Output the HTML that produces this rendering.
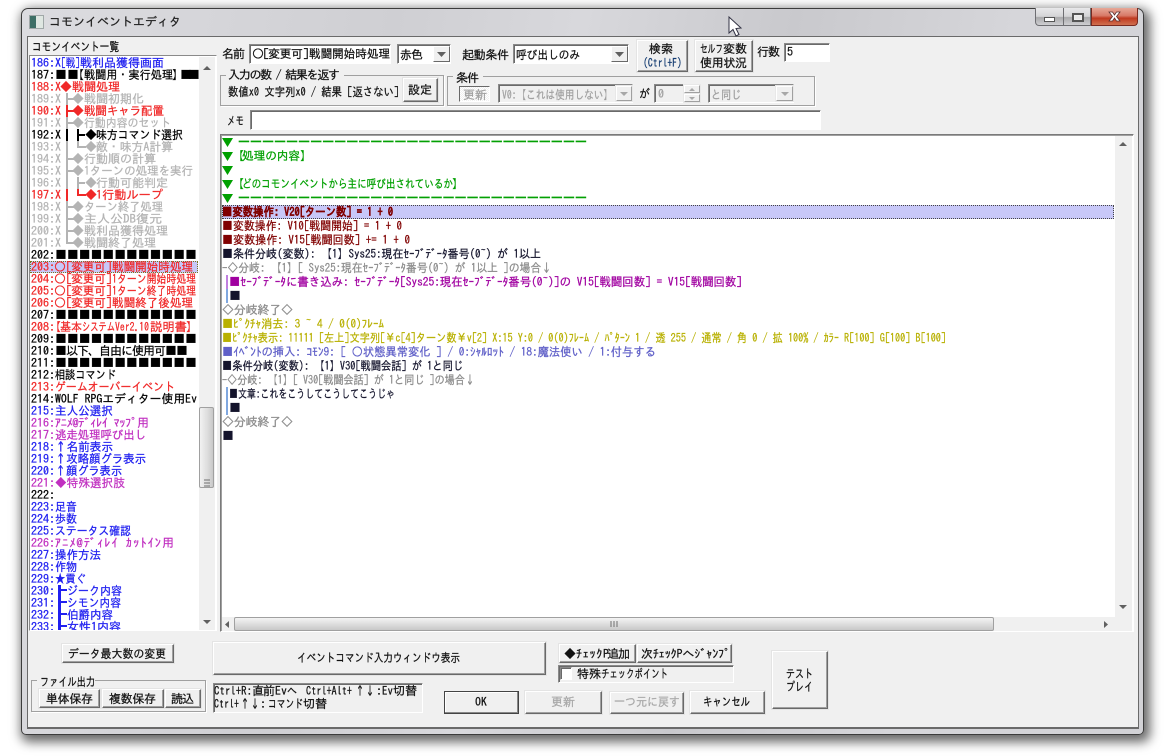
<!DOCTYPE html>
<html><head><meta charset="utf-8">
<style>
html,body{margin:0;padding:0;background:#fff;width:1165px;height:756px;overflow:hidden}
div{position:absolute;box-sizing:border-box}
#win{left:21px;top:8px;width:1123px;height:727px;border:1px solid #3c3c3c;border-radius:7px 7px 5px 5px;background:linear-gradient(100deg,#dcdce0 0%,#cfcfd3 30%,#d8d8dc 45%,#c9c9cd 62%,#d6d6da 80%,#d2d2d6 100%);box-shadow:3px 4px 11px 3px rgba(0,0,0,.6)}
#client{left:27px;top:36px;width:1112px;height:693px;background:#f0f0f0;border:1px solid #6a6a6a;border-bottom-width:2px}
.in{background:#f0f0f0;border:1px solid;border-color:#8a8a8a #fff #fff #8a8a8a;box-shadow:inset 1px 1px #6a6a6a}
.w{background:#fff}
.btn{background:#f0f0f0;border:1px solid;border-color:#fff #696969 #696969 #fff;box-shadow:inset -1px -1px #a0a0a0,0 0 0 1px #e4e4e4}
.dbtn{background:#f0f0f0;border:1px solid;border-color:#fff #a0a0a0 #a0a0a0 #fff;box-shadow:0 0 0 1px #e8e8e8}
.grp{border:1px solid #a0a0a0;box-shadow:1px 1px #fff}
.lab{background:#f0f0f0;height:6px}
.arr{background:#f0f0f0;border:1px solid;border-color:#fff #696969 #696969 #fff}
.track{background:#f0f0f0}
.thv{background:linear-gradient(90deg,#f2f2f2,#dcdcdc 60%,#c8c8c8);border:1px solid #a0a0a0;border-radius:2px}
.thh{background:linear-gradient(180deg,#f4f4f4,#dcdcdc 55%,#c8c8c8);border:1px solid #a0a0a0;border-radius:2px}
svg{position:absolute;left:0;top:0}
text{font-family:"IPAGothic","Noto Sans CJK JP",monospace;font-size:12px;white-space:pre;stroke-width:.25px}
</style></head><body>
<div id="win"></div>
<div style="left:29px;top:15px;width:15px;height:14px;background:linear-gradient(90deg,#3d6f66 0 45%,#dfe7e2 45% 100%);border:1px solid #a0a8a8"></div>
<div style="left:1035px;top:8px;width:56px;height:18px;border:1px solid #6e6e72;border-top:0;border-radius:0 0 0 4px;background:linear-gradient(180deg,#e8e8ea,#d4d4d6 50%,#a8a8aa 55%,#cfcfd2)"></div>
<div style="left:1063px;top:8px;width:1px;height:18px;background:#6e6e72"></div>
<div style="left:1091px;top:8px;width:47px;height:18px;border:1px solid #7a2a20;border-top:0;border-radius:0 0 4px 0;background:linear-gradient(180deg,#e6a898,#d87a68 45%,#c03a20 60%,#d07050)"></div>
<div style="left:1044px;top:17px;width:11px;height:5px;background:#fff;border:1px solid #555"></div>
<div style="left:1072px;top:13px;width:12px;height:9px;border:2px solid #555;box-shadow:inset 0 0 0 1px #eee;background:#e8e8e8"></div>

<div id="client"></div>

<!-- event list -->
<div style="left:29px;top:55px;width:188px;height:576px;background:#fff;border:1px solid;border-color:#8a8a8a #fff #fff #8a8a8a"></div>
<div class="track" style="left:199px;top:57px;width:16px;height:573px"></div>
<div class="thv" style="left:199px;top:407px;width:15px;height:81px"></div>
<div style="left:30px;top:261px;width:168px;height:12px;background:#c8c8f8;outline:1px dotted #7a7a20;outline-offset:-1px"></div>

<!-- name row -->
<div class="in w" style="left:249px;top:44px;width:142px;height:20px"></div>
<div class="in w" style="left:397px;top:44px;width:54px;height:20px"></div>
<div class="arr" style="left:433px;top:46px;width:17px;height:16px"></div>
<div class="in w" style="left:513px;top:44px;width:116px;height:20px"></div>
<div class="arr" style="left:611px;top:46px;width:17px;height:16px"></div>
<div class="btn" style="left:637px;top:40px;width:51px;height:32px"></div>
<div class="btn" style="left:695px;top:40px;width:58px;height:32px"></div>
<div class="in w" style="left:784px;top:43px;width:46px;height:19px"></div>

<!-- groups -->
<div class="grp" style="left:220px;top:75px;width:224px;height:31px"></div>
<div class="lab" style="left:226px;top:72px;width:118px"></div>
<div class="btn" style="left:403px;top:78px;width:35px;height:24px"></div>
<div class="grp" style="left:447px;top:76px;width:368px;height:30px"></div>
<div class="lab" style="left:453px;top:73px;width:30px"></div>
<div style="left:459px;top:86px;width:31px;height:16px;border:1px solid;border-color:#696969 #fff #fff #696969;background:repeating-conic-gradient(#f0f0f0 0 25%,#fff 0 50%) 0 0/2px 2px"></div>
<div class="in" style="left:498px;top:84px;width:135px;height:19px"></div>
<div class="dbtn" style="left:616px;top:86px;width:16px;height:15px"></div>
<div class="in" style="left:654px;top:84px;width:47px;height:19px"></div>
<div class="dbtn" style="left:684px;top:85px;width:16px;height:8px"></div>
<div class="dbtn" style="left:684px;top:94px;width:16px;height:8px"></div>
<div class="in" style="left:708px;top:84px;width:86px;height:19px"></div>
<div class="dbtn" style="left:776px;top:86px;width:17px;height:15px"></div>
<div class="in w" style="left:250px;top:110px;width:571px;height:20px"></div>

<!-- command list -->
<div style="left:220px;top:134px;width:914px;height:498px;background:#fff;border:1px solid;border-color:#7a7a7a #fff #fff #7a7a7a;box-shadow:inset 1px 1px #a0a0a0"></div>
<div style="left:222px;top:205px;width:892px;height:14px;background:#c8c8f8;outline:1px dotted #444;outline-offset:-1px"></div>
<div class="track" style="left:1115px;top:136px;width:17px;height:495px"></div>
<div class="track" style="left:222px;top:617px;width:910px;height:14px"></div>
<div class="thh" style="left:234px;top:617px;width:760px;height:14px"></div>

<!-- bottom -->
<div class="btn" style="left:62px;top:644px;width:112px;height:19px"></div>
<div class="grp" style="left:31px;top:680px;width:175px;height:32px"></div>
<div class="lab" style="left:37px;top:677px;width:58px"></div>
<div class="btn" style="left:39px;top:689px;width:61px;height:19px"></div>
<div class="btn" style="left:102px;top:689px;width:62px;height:19px"></div>
<div class="btn" style="left:165px;top:689px;width:36px;height:19px"></div>
<div class="btn" style="left:213px;top:642px;width:333px;height:33px"></div>
<div class="in" style="left:213px;top:683px;width:210px;height:30px"></div>
<div class="btn" style="left:559px;top:644px;width:77px;height:19px"></div>
<div class="btn" style="left:637px;top:644px;width:95px;height:19px"></div>
<div class="in" style="left:558px;top:665px;width:176px;height:18px"></div>
<div class="in w" style="left:560px;top:667px;width:12px;height:13px"></div>
<div class="btn" style="left:444px;top:691px;width:75px;height:23px;border-color:#444;box-shadow:inset -1px -1px #888,inset 1px 1px #fff"></div>
<div class="btn" style="left:525px;top:691px;width:77px;height:23px"></div>
<div class="btn" style="left:610px;top:692px;width:74px;height:22px"></div>
<div class="btn" style="left:690px;top:691px;width:75px;height:23px"></div>
<div class="btn" style="left:772px;top:651px;width:56px;height:58px"></div>

<svg width="1165" height="756" xmlns="http://www.w3.org/2000/svg">
<defs><clipPath id="lc"><rect x="30" y="56" width="169" height="574"/></clipPath></defs>
<!-- scrollbar arrows -->
<g fill="#606060">
<path d="M203 70l4-4 4 4z"/><path d="M203 620h8l-4 4z"/>
<path d="M1119 146l4-4 4 4z"/><path d="M1119 605h8l-4 4z"/>
<path d="M229 621v7l-4-3.500z"/><path d="M1104 621v7l4-3.500z"/>
<path d="M437 52h9l-4.500 5z"/><path d="M615 52h9l-4.500 5z"/>
</g>
<g fill="#a8a8a8">
<path d="M620 92h8l-4 4z"/><path d="M781 92h8l-4 4z"/><path d="M689 91l3-3 3 3z"/><path d="M689 97h6l-3 3z"/>
</g>
<path d="M204 480h6M204 483h6M204 486h6M611 621v6M614 621v6M617 621v6" stroke="#707070" fill="none"/>
<!-- cursor -->
<path d="M729 17v16l4-3.500 3 6.500 3-1.500-3-6 5-.5z" fill="#fff" stroke="#334" stroke-width="1"/>
<!-- close X -->
<path d="M1109 12l3.500 0 2 3 2-3 3.500 0-3.500 4.500 3.500 4.500-3.500 0-2-3-2 3-3.500 0 3.500-4.500z" fill="#fff" stroke="#5a3030" stroke-width=".8"/>

<text x="49" y="26" fill="#222" stroke="#222" textLength="132">コモンイベントエディタ</text>
<text x="32" y="51" fill="#111" stroke="#111" textLength="87" lengthAdjust="spacingAndGlyphs">コモンイベント一覧</text>

<g clip-path="url(#lc)">
<g fill="#2020f0" stroke="#2020f0">
<text x="31" y="67">186:X</text><text x="61" y="67" textLength="19" lengthAdjust="spacingAndGlyphs">[戦]</text><text x="80" y="67">戦利品獲得画面</text>
<text x="31" y="415">215:</text><text x="55" y="415" textLength="58" lengthAdjust="spacingAndGlyphs">主人公選択</text>
<text x="31" y="451">218:</text><text x="55" y="451" textLength="58" lengthAdjust="spacingAndGlyphs">↑名前表示</text>
<text x="31" y="463">219:</text><text x="55" y="463" textLength="91" lengthAdjust="spacingAndGlyphs">↑攻略顔グラ表示</text>
<text x="31" y="475">220:</text><text x="55" y="475" textLength="67" lengthAdjust="spacingAndGlyphs">↑顔グラ表示</text>
<text x="31" y="511">223:</text><text x="55" y="511" textLength="22" lengthAdjust="spacingAndGlyphs">足音</text>
<text x="31" y="523">224:</text><text x="55" y="523" textLength="22" lengthAdjust="spacingAndGlyphs">歩数</text>
<text x="31" y="535">225:</text><text x="55" y="535" textLength="76" lengthAdjust="spacingAndGlyphs">ステータス確認</text>
<text x="31" y="559">227:</text><text x="55" y="559" textLength="46" lengthAdjust="spacingAndGlyphs">操作方法</text>
<text x="31" y="571">228:</text><text x="55" y="571" textLength="22" lengthAdjust="spacingAndGlyphs">作物</text>
<text x="31" y="583">229:</text><text x="55" y="583" textLength="31" lengthAdjust="spacingAndGlyphs">★貢ぐ</text>
<text x="31" y="595">230:</text><text x="67" y="595" textLength="55" lengthAdjust="spacingAndGlyphs">ジーク内容</text>
<text x="31" y="607">231:</text><text x="67" y="607" textLength="54" lengthAdjust="spacingAndGlyphs">シモン内容</text>
<text x="31" y="619">232:</text><text x="67" y="619" textLength="46" lengthAdjust="spacingAndGlyphs">伯爵内容</text>
<text x="31" y="631">233:</text><text x="67" y="631" textLength="54" lengthAdjust="spacingAndGlyphs">女性1内容</text>
<path d="M58 585h3v47h-3zM61 589h6v2h-6zM61 601h6v2h-6zM61 613h6v2h-6zM61 625h6v2h-6z" stroke="none"/>
</g>
<g fill="#000" stroke="#000">
<text x="31" y="79">187:</text><text x="55" y="79">■■</text><text x="72" y="79">【</text><text x="84" y="79" textLength="89" lengthAdjust="spacingAndGlyphs">戦闘用・実行処理</text><text x="172" y="79">】</text><text x="180" y="79" textLength="20">■■</text>
<text x="31" y="139">192:X</text><text x="85" y="139">◆</text><text x="96" y="139" textLength="87" lengthAdjust="spacingAndGlyphs">味方コマンド選択</text>
<path d="M66 129h2v12h-2zM77 129h2v12h-2zM79 134h6v2h-6z" stroke="none"/>
<text x="31" y="259">202:</text><text x="55" y="259" textLength="142">■■■■■■■■■■■■</text>
<text x="31" y="319">207:</text><text x="55" y="319" textLength="142">■■■■■■■■■■■■</text>
<text x="31" y="343">209:</text><text x="55" y="343" textLength="142">■■■■■■■■■■■■</text>
<text x="31" y="355">210:</text><text x="55" y="355" textLength="133">■以下、自由に使用可■■</text>
<text x="31" y="367">211:</text><text x="55" y="367" textLength="142">■■■■■■■■■■■■</text>
<text x="31" y="379">212:</text><text x="55" y="379" textLength="61" lengthAdjust="spacingAndGlyphs">相談コマンド</text>
<text x="31" y="403">214:</text><text x="55" y="403" textLength="142" lengthAdjust="spacingAndGlyphs">WOLF RPGエディター使用Ev</text>
<text x="31" y="499">222:</text>
</g>
<g fill="#f02828" stroke="#f02828">
<text x="31" y="91">188:X</text><text x="60" y="91">◆</text><text x="72" y="91" textLength="48">戦闘処理</text>
<text x="31" y="115">190:X</text><text x="72" y="115">◆</text><text x="84" y="115" textLength="80" lengthAdjust="spacingAndGlyphs">戦闘キャラ配置</text>
<path d="M66 105h2v12h-2zM68 110h6v2h-6z" stroke="none"/>
<text x="31" y="199">197:X</text><text x="85" y="199">◆</text><text x="96" y="199" textLength="67" lengthAdjust="spacingAndGlyphs">1行動ループ</text>
<path d="M66 189h2v12h-2zM77 189h2v7h-2zM77 194h9v2h-9z" stroke="none"/>
<text x="31" y="271">203:</text><text x="54" y="271">○</text><text x="66" y="271">[</text><text x="71" y="271" textLength="35">変更可</text><text x="106" y="271">]</text><text x="112" y="271" textLength="81" lengthAdjust="spacingAndGlyphs">戦闘開始時処理</text>
<text x="31" y="283">204:</text><text x="54" y="283">○</text><text x="66" y="283">[</text><text x="71" y="283" textLength="35">変更可</text><text x="106" y="283">]</text><text x="112" y="283" textLength="84" lengthAdjust="spacingAndGlyphs">1ターン開始時処理</text>
<text x="31" y="295">205:</text><text x="54" y="295">○</text><text x="66" y="295">[</text><text x="71" y="295" textLength="35">変更可</text><text x="106" y="295">]</text><text x="112" y="295" textLength="84" lengthAdjust="spacingAndGlyphs">1ターン終了時処理</text>
<text x="31" y="307">206:</text><text x="54" y="307">○</text><text x="66" y="307">[</text><text x="71" y="307" textLength="35">変更可</text><text x="106" y="307">]</text><text x="112" y="307" textLength="81" lengthAdjust="spacingAndGlyphs">戦闘終了後処理</text>
<text x="31" y="331">208:</text><text x="49" y="331">【</text><text x="60" y="331" textLength="22" lengthAdjust="spacingAndGlyphs">基本</text><text x="82" y="331" textLength="33" lengthAdjust="spacingAndGlyphs">システム</text><text x="115" y="331" textLength="34" lengthAdjust="spacingAndGlyphs">Ver2.10</text><text x="150" y="331" textLength="37" lengthAdjust="spacingAndGlyphs">説明書</text><text x="186" y="331">】</text>
<text x="31" y="391">213:</text><text x="55" y="391" textLength="120" lengthAdjust="spacingAndGlyphs">ゲームオーバーイベント</text>
</g>
<g fill="#b4b4b4" stroke="#b4b4b4">
<text x="31" y="103">189:X</text><text x="72" y="103">◆</text><text x="84" y="103" textLength="60">戦闘初期化</text>
<text x="31" y="127">191:X</text><text x="72" y="127">◆</text><text x="84" y="127" textLength="87" lengthAdjust="spacingAndGlyphs">行動内容のセット</text>
<text x="31" y="151">193:X</text><text x="85" y="151">◆</text><text x="96" y="151" textLength="77" lengthAdjust="spacingAndGlyphs">敵・味方A計算</text>
<text x="31" y="163">194:X</text><text x="72" y="163">◆</text><text x="84" y="163" textLength="72">行動順の計算</text>
<text x="31" y="175">195:X</text><text x="72" y="175">◆</text><text x="84" y="175" textLength="109" lengthAdjust="spacingAndGlyphs">1ターンの処理を実行</text>
<text x="31" y="187">196:X</text><text x="85" y="187">◆</text><text x="96" y="187" textLength="72">行動可能判定</text>
<text x="31" y="211">198:X</text><text x="72" y="211">◆</text><text x="84" y="211" textLength="79" lengthAdjust="spacingAndGlyphs">ターン終了処理</text>
<text x="31" y="223">199:X</text><text x="72" y="223">◆</text><text x="84" y="223" textLength="78" lengthAdjust="spacingAndGlyphs">主人公DB復元</text>
<text x="31" y="235">200:X</text><text x="72" y="235">◆</text><text x="84" y="235" textLength="84">戦利品獲得処理</text>
<text x="31" y="247">201:X</text><text x="72" y="247">◆</text><text x="84" y="247" textLength="72">戦闘終了処理</text>
<path stroke="none" d="M66 93h2v12h-2zM68 98h6v2h-6zM66 117h2v12h-2zM68 122h6v2h-6zM66 141h2v12h-2zM77 141h2v7h-2zM77 146h9v2h-9zM66 153h2v12h-2zM68 158h6v2h-6zM66 165h2v12h-2zM68 170h6v2h-6zM66 177h2v12h-2zM77 177h2v12h-2zM79 182h6v2h-6zM66 201h2v12h-2zM68 206h6v2h-6zM66 213h2v12h-2zM68 218h6v2h-6zM66 225h2v12h-2zM68 230h6v2h-6zM66 237h2v7h-2zM66 242h8v2h-8z"/>
</g>
<g fill="#c030c0" stroke="#c030c0">
<text x="31" y="427">216:</text><text x="55" y="427" textLength="94">ｱﾆﾒ@ﾃﾞｨﾚｲ ﾏｯﾌﾟ用</text>
<text x="31" y="439">217:</text><text x="55" y="439" textLength="91" lengthAdjust="spacingAndGlyphs">逃走処理呼び出し</text>
<text x="31" y="487">221:</text><text x="55" y="487" textLength="70" lengthAdjust="spacingAndGlyphs">◆特殊選択肢</text>
<text x="31" y="547">226:</text><text x="55" y="547" textLength="119">ｱﾆﾒ@ﾃﾞｨﾚｲ ｶｯﾄｲﾝ用</text>
</g>
</g>

<!-- top controls -->
<g fill="#111" stroke="#111">
<text x="222" y="58" textLength="23">名前</text>
<text x="252" y="58">○</text><text x="263" y="58">[</text><text x="268" y="58" textLength="35">変更可</text><text x="303" y="58">]</text><text x="309" y="58" textLength="81" lengthAdjust="spacingAndGlyphs">戦闘開始時処理</text>
<text x="400" y="59" textLength="23">赤色</text>
<text x="462" y="59" textLength="47">起動条件</text>
<text x="516" y="59" textLength="64" lengthAdjust="spacingAndGlyphs">呼び出しのみ</text>
<text x="649" y="53">検索</text>
<text x="643" y="67" fill="#123a70" stroke="#123a70" textLength="39" lengthAdjust="spacingAndGlyphs">(Ctrl+F)</text>
<text x="700" y="53" textLength="23" lengthAdjust="spacingAndGlyphs">セルフ</text><text x="723" y="53" textLength="24" lengthAdjust="spacingAndGlyphs">変数</text>
<text x="700" y="67" textLength="47">使用状況</text>
<text x="757" y="56" textLength="23">行数</text>
<text x="787" y="56">5</text>
<text x="228" y="79" textLength="112">入力の数 / 結果を返す</text>
<text x="228" y="96" textLength="171" lengthAdjust="spacingAndGlyphs">数値x0 文字列x0 / 結果 [返さない]</text>
<text x="408" y="94" textLength="24">設定</text>
<text x="456" y="82" textLength="23">条件</text>
<text x="639" y="98" textLength="11" lengthAdjust="spacingAndGlyphs">が</text>
<text x="227" y="125" textLength="17" lengthAdjust="spacingAndGlyphs">メモ</text>
</g>
<g fill="#a0a0a0" stroke="#a0a0a0">
<text x="463" y="99" textLength="24">更新</text>
<text x="502" y="99" textLength="111" lengthAdjust="spacingAndGlyphs">V0:【これは使用しない】</text>
<text x="658" y="98">0</text>
<text x="711" y="99" textLength="30" lengthAdjust="spacingAndGlyphs">と同じ</text>
</g>

<!-- command rows -->
<path d="M222 138h11l-5.500 9zM222 152h11l-5.500 9zM222 166h11l-5.500 9zM222 180h11l-5.500 9zM222 194h11l-5.500 9z" fill="#00a000"/>
<g fill="#00a000" stroke="#00a000">
<text x="238" y="146" textLength="349" style="stroke-width:.7px">ーーーーーーーーーーーーーーーーーーーーーーーーーーーーー</text>
<text x="232" y="160">【</text><text x="242" y="160" textLength="58" lengthAdjust="spacingAndGlyphs">処理の内容</text><text x="300" y="160">】</text>
<text x="232" y="188">【</text><text x="242" y="188" textLength="211" lengthAdjust="spacingAndGlyphs">どのコモンイベントから主に呼び出されているか</text><text x="452" y="188">】</text>
<text x="238" y="202" textLength="349" style="stroke-width:.7px">ーーーーーーーーーーーーーーーーーーーーーーーーーーーーー</text>
</g>
<g fill="#800000" stroke="#800000">
<text x="222" y="216" font-weight="bold" textLength="171" lengthAdjust="spacingAndGlyphs">■変数操作: V20[ターン数] = 1 + 0</text>
<text x="222" y="230" textLength="180" lengthAdjust="spacingAndGlyphs">■変数操作: V10[戦闘開始] = 1 + 0</text>
<text x="222" y="244" textLength="188" lengthAdjust="spacingAndGlyphs">■変数操作: V15[戦闘回数] += 1 + 0</text>
</g>
<g fill="#14142c" stroke="#14142c">
<text x="222" y="258" textLength="319" lengthAdjust="spacingAndGlyphs">■条件分岐(変数): 【1】Sys25:現在ｾｰﾌﾞﾃﾞｰﾀ番号(0~) が 1以上</text>
<text x="222" y="370" textLength="241" lengthAdjust="spacingAndGlyphs">■条件分岐(変数): 【1】V30[戦闘会話] が 1と同じ</text>
<text x="229" y="398" textLength="166" lengthAdjust="spacingAndGlyphs">■文章:これをこうしてこうしてこうじゃ</text>
<text x="229" y="300">■</text><text x="229" y="412">■</text><text x="222" y="440">■</text>
</g>
<g fill="#8c8c8c" stroke="#8c8c8c">
<text x="222" y="272" textLength="330" lengthAdjust="spacingAndGlyphs">-◇分岐: 【1】[ Sys25:現在ｾｰﾌﾞﾃﾞｰﾀ番号(0~) が 1以上 ]の場合↓</text>
<text x="222" y="314" textLength="71">◇分岐終了◇</text>
<text x="222" y="384" textLength="253" lengthAdjust="spacingAndGlyphs">-◇分岐: 【1】[ V30[戦闘会話] が 1と同じ ]の場合↓</text>
<text x="222" y="426" textLength="71">◇分岐終了◇</text>
</g>
<text x="229" y="286" fill="#a000a0" stroke="#a000a0" textLength="513" lengthAdjust="spacingAndGlyphs">■ｾｰﾌﾞﾃﾞｰﾀに書き込み: ｾｰﾌﾞﾃﾞｰﾀ[Sys25:現在ｾｰﾌﾞﾃﾞｰﾀ番号(0~)]の V15[戦闘回数] = V15[戦闘回数]</text>
<path d="M226 275h2v14h-2z" fill="#c080e0"/>
<path d="M226 289h2v14h-2zM226 387h2v28h-2z" fill="#80a8e0"/>
<g fill="#b8b000" stroke="#b8b000">
<text x="222" y="328" textLength="162" lengthAdjust="spacingAndGlyphs">■ﾋﾟｸﾁｬ消去: 3 ~ 4 / 0(0)ﾌﾚｰﾑ</text>
<text x="222" y="342" textLength="724" lengthAdjust="spacingAndGlyphs">■ﾋﾟｸﾁｬ表示: 11111 [左上]文字列[¥c[4]ターン数¥v[2] X:15 Y:0 / 0(0)ﾌﾚｰﾑ / ﾊﾟﾀｰﾝ 1 / 透 255 / 通常 / 角 0 / 拡 100% / ｶﾗｰ R[100] G[100] B[100]</text>
</g>
<text x="222" y="356" fill="#6060c8" stroke="#6060c8" textLength="434" lengthAdjust="spacingAndGlyphs">■ｲﾍﾞﾝﾄの挿入: ｺﾓﾝ9: [ ○状態異常変化 ] / 0:ｼｬﾙﾛｯﾄ / 18:魔法使い / 1:付与する</text>

<!-- bottom labels -->
<g fill="#111" stroke="#111">
<text x="68" y="658" textLength="98" lengthAdjust="spacingAndGlyphs">データ最大数の変更</text>
<text x="40" y="686" textLength="55" lengthAdjust="spacingAndGlyphs">ファイル出力</text>
<text x="46" y="703" textLength="47">単体保存</text>
<text x="109" y="703" textLength="47">複数保存</text>
<text x="171" y="703" textLength="23">読込</text>
<text x="297" y="662" textLength="163" lengthAdjust="spacingAndGlyphs">イベントコマンド入力ウィンドウ表示</text>
<text x="214" y="695" textLength="38" lengthAdjust="spacingAndGlyphs">Ctrl+R:</text><text x="252" y="695" textLength="23">直前</text><text x="275" y="695" textLength="12" lengthAdjust="spacingAndGlyphs">Ev</text><text x="287" y="695" textLength="10" lengthAdjust="spacingAndGlyphs">へ</text><text x="306" y="695" textLength="46" lengthAdjust="spacingAndGlyphs">Ctrl+Alt+</text><text x="355" y="695" textLength="20" lengthAdjust="spacingAndGlyphs">↑↓</text><text x="376" y="695" textLength="5">:</text><text x="382" y="695" textLength="11" lengthAdjust="spacingAndGlyphs">Ev</text><text x="393" y="695">切替</text>
<text x="214" y="708" textLength="25" lengthAdjust="spacingAndGlyphs">Ctrl+</text><text x="240" y="708" textLength="20" lengthAdjust="spacingAndGlyphs">↑↓</text><text x="260" y="708" textLength="6">:</text><text x="268" y="708" textLength="35" lengthAdjust="spacingAndGlyphs">コマンド</text><text x="303" y="708">切替</text>
<text x="564" y="658">◆</text><text x="576" y="658" textLength="33">ﾁｪｯｸP</text><text x="607" y="658" textLength="23">追加</text>
<text x="641" y="658" textLength="89" lengthAdjust="spacingAndGlyphs">次ﾁｪｯｸPへｼﾞｬﾝﾌﾟ</text>
<text x="577" y="678">特殊</text><text x="601" y="678" textLength="67" lengthAdjust="spacingAndGlyphs">チェックポイント</text>
<text x="475" y="706">OK</text>
<text x="703" y="706" textLength="47" lengthAdjust="spacingAndGlyphs">キャンセル</text>
<text x="786" y="678" textLength="27" lengthAdjust="spacingAndGlyphs">テスト</text>
<text x="786" y="691" textLength="27" lengthAdjust="spacingAndGlyphs">プレイ</text>
</g>
<g fill="#a8a8a8" stroke="#a8a8a8">
<text x="551" y="706" textLength="24">更新</text>
<text x="614" y="706" textLength="66" lengthAdjust="spacingAndGlyphs">一つ元に戻す</text>
</g>
</svg>
</body></html>
